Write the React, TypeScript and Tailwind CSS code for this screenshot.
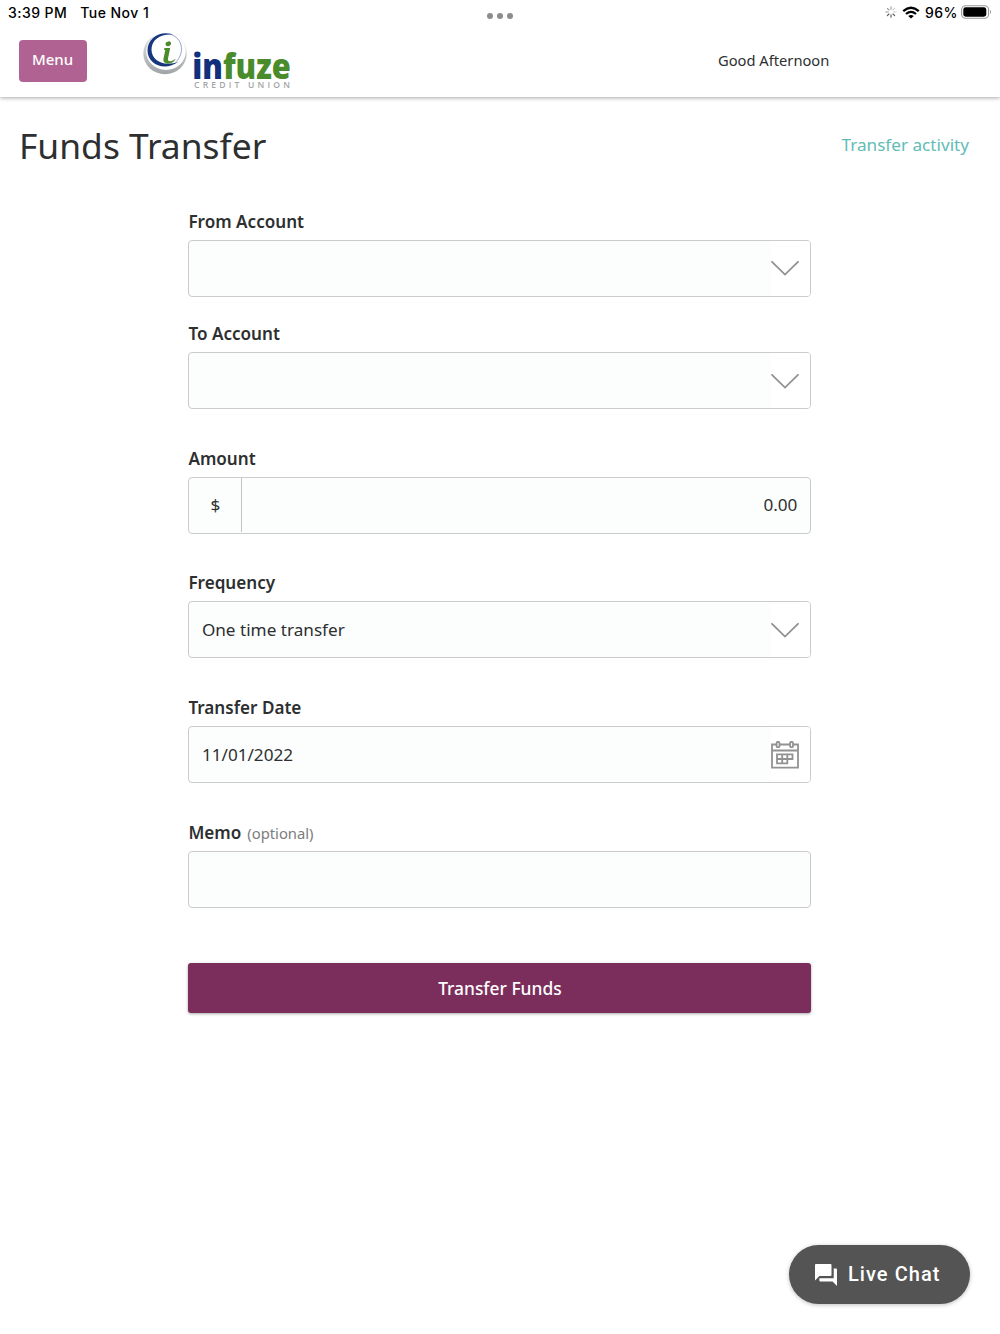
import type { ReactNode } from "react";

const Chevron = () => (
  <svg width="28" height="16" viewBox="0 0 28 16" fill="none" stroke="#919191" strokeWidth="1.8" strokeLinecap="round">
    <path d="M1 1.8 14 14.6 27 1.8" />
  </svg>
);

const CalendarIcon = () => (
  <svg width="28" height="28" viewBox="0 0 28 28" fill="none" stroke="#929292" strokeWidth="1.8">
    <path d="M5.5 3.5H1V26.7H27V3.5H22.5M8.5 3.5H19.5M1 9.5H27" />
    <rect x="5.6" y="1" width="2.9" height="5.2" rx="1" />
    <rect x="19.1" y="1" width="2.9" height="5.2" rx="1" />
    <path d="M6 13.3H21.5V18H6ZM6 18V22.4H16.3V13.3M11.2 13.3V22.4" />
  </svg>
);

const Logo = () => (
  <svg className="overflow-visible" width="152" height="62" viewBox="0 0 152 62" role="img" aria-label="infuze credit union">
    <defs>
      <linearGradient id="ring" x1="0" y1="0" x2="0" y2="1">
        <stop offset="0" stopColor="#e9eaeb" />
        <stop offset="0.5" stopColor="#c4c6c8" />
        <stop offset="1" stopColor="#a0a4a6" />
      </linearGradient>
    </defs>
    <ellipse cx="23" cy="23.5" rx="21.7" ry="20.7" fill="url(#ring)" />
    <ellipse cx="24" cy="21.3" rx="19.8" ry="18.6" fill="#fff" />
    <path d="M31 4.6C19 0 5.5 7.5 5.5 20.5C5.5 34.5 23 42 36.5 31.5C24 37 9.5 32 9.5 19.5C9.5 9 19.5 3.4 31 4.6Z" fill="#17367e" />
    <path d="M28 4.2C41.5 7.8 42.5 24 34 31.6" fill="none" stroke="#17367e" strokeWidth="0.9" opacity="0.5" />
    <ellipse cx="26.3" cy="13.8" rx="2.8" ry="2.3" fill="#4a8b2c" transform="rotate(-20 26.3 13.8)" />
    <path d="M22.5 18.1H28.2L26 28.6Q25.5 31.6 28.6 31.2Q31.5 30.8 34 28.6Q30.6 34.6 24.6 33.5Q20.6 32.4 21.5 28.4L23.3 20H22Z" fill="#4a8b2c" />
    <text x="50.3" y="48.6" fontFamily="Open Sans" fontWeight="800" fontSize="35" textLength="98.5" lengthAdjust="spacingAndGlyphs" fill="#4a8b2c">
      <tspan fill="#10307b">in</tspan>fuze
    </text>
    <text x="52" y="58.4" fontFamily="Open Sans" fontWeight="600" fontSize="8.6" textLength="96" lengthAdjust="spacing" fill="#a3a6a8">CREDIT UNION</text>
  </svg>
);

const StatusBar = () => (
  <div className="grid h-6 grid-cols-3 items-center pl-2 pr-2 font-['Inter',sans-serif] text-[14px] font-medium text-black">
    <div className="flex gap-[13px] whitespace-nowrap tracking-[0.45px]">
      <span>3:39 PM</span>
      <span>Tue Nov 1</span>
    </div>
    <div className="flex justify-center gap-1 pt-[7px]">
      <i className="size-[6px] rounded-full bg-[#8c8c8c]" />
      <i className="size-[6px] rounded-full bg-[#8c8c8c]" />
      <i className="size-[6px] rounded-full bg-[#8c8c8c]" />
    </div>
    <div className="flex items-center justify-end">
      <svg width="12" height="12" viewBox="0 0 12 12" strokeWidth="1.1" strokeLinecap="round">
        <path d="M6 .8V3.2M2.3 2.3 4 4M.8 6H3.2" stroke="#999" />
        <path d="M2.3 9.7 4 8M6 8.8V11.2M9.7 9.7 8 8" stroke="#555" />
        <path d="M8.8 6H11.2M9.7 2.3 8 4" stroke="#ccc" />
      </svg>
      <svg className="ml-[5px]" width="18" height="13" viewBox="0 0 18 13" fill="none" stroke="#000" strokeWidth="2.3">
        <path d="M1.2 5.1Q9 -1.7 16.8 5.1M4 8Q9 3.7 14 8" />
        <path d="M9 12.6 6.2 9.9Q9 7.9 11.8 9.9Z" fill="#000" stroke="none" />
      </svg>
      <span className="ml-[5px] tracking-[0.5px]">96%</span>
      <svg className="ml-[3px]" width="31" height="14" viewBox="0 0 31 14">
        <rect x=".6" y=".7" width="27" height="12.6" rx="4" fill="none" stroke="#999" strokeWidth="1.1" />
        <rect x="2.3" y="2.3" width="23" height="9.4" rx="2.4" fill="#000" />
        <path d="M29 4.8Q31 7 29 9.2Z" fill="#999" />
      </svg>
    </div>
  </div>
);

const Field = ({ label, hint, className, children }: { label: string; hint?: string; className?: string; children?: ReactNode }) => (
  <div className={className}>
    <div className="mb-[6px] flex h-6 items-baseline text-[17.1px] font-semibold leading-6 text-[#2d2f30]">
      {label}
      {hint && <span className="ml-[6px] text-[14.8px] font-normal text-[#7b7d7e]">{hint}</span>}
    </div>
    <div className="flex h-[57px] items-center rounded-[4px] border-[1.5px] border-[#cbcbcb] bg-[#fcfefd] text-[17.15px] text-[#2d2f30]">
      {children}
    </div>
  </div>
);

const Trailing = ({ children }: { children: ReactNode }) => (
  <div className="ml-auto flex h-full w-[39px] items-center rounded-r-[3px] bg-white">{children}</div>
);

export default function App() {
  return (
    <div className="flex min-h-[1334px] w-full flex-col bg-white font-['Noto_Sans',sans-serif] text-[#2d2f30]">
      <header className="h-[96.5px] shadow-[0_1px_4px_rgba(0,0,0,0.35)]">
        <StatusBar />
        <div className="flex items-start">
          <button className="ml-[18.5px] mt-4 h-[42px] w-[68px] rounded-[4px] bg-[#b06392] pb-[4px] text-[15px] font-medium text-white">Menu</button>
          <div className="ml-[55.5px] mt-[6px]">
            <Logo />
          </div>
          <span className="ml-[424px] mt-[24px] whitespace-nowrap text-[14.7px] leading-6">Good Afternoon</span>
        </div>
      </header>

      <div className="flex items-start justify-between pl-[19px] pr-[31px] pt-[23.5px]">
        <h1 className="text-[35.4px] leading-[51px]">Funds Transfer</h1>
        <a className="mt-[13px] text-[17.15px] leading-6 text-[#62bcb5]">Transfer activity</a>
      </div>

      <main className="ml-[188.4px] mt-[38.5px] w-[623px]">
        <Field label="From Account">
          <Trailing><Chevron /></Trailing>
        </Field>
        <Field label="To Account" className="mt-[25.5px]">
          <Trailing><Chevron /></Trailing>
        </Field>
        <Field label="Amount" className="mt-[37.7px]">
          <span className="flex h-[54px] w-[53px] items-center justify-center border-r-[1.5px] border-[#c4c4c4]">$</span>
          <span className="ml-auto mr-[13px]">0.00</span>
        </Field>
        <Field label="Frequency" className="mt-[37.7px]">
          <span className="ml-[12.5px]">One time transfer</span>
          <Trailing><Chevron /></Trailing>
        </Field>
        <Field label="Transfer Date" className="mt-[37.7px]">
          <span className="ml-[12.5px]">11/01/2022</span>
          <Trailing><CalendarIcon /></Trailing>
        </Field>
        <Field label="Memo" hint="(optional)" className="mt-[37.7px]" />
        <button className="mt-[55px] h-[50px] w-full rounded-[3px] bg-[#7b2d5b] text-[17.4px] font-medium text-white shadow-[0_1px_3px_rgba(0,0,0,0.35)]">
          Transfer Funds
        </button>
      </main>

      <button className="mb-[30px] ml-auto mr-[30px] mt-auto flex h-[59px] w-[181px] items-center rounded-full bg-[#545454] pl-[26px] font-['Roboto',sans-serif] text-[20px] font-medium tracking-[1.05px] text-white shadow-[0_1px_4px_rgba(0,0,0,0.25)]">
        <svg width="22" height="22" viewBox="2 2 20 20" fill="currentColor">
          <path d="M21 6h-2v9H6v2c0 .55.45 1 1 1h11l4 4V7c0-.55-.45-1-1-1zm-4 6V3c0-.55-.45-1-1-1H3c-.55 0-1 .45-1 1v14l4-4h10c.55 0 1-.45 1-1z" />
        </svg>
        <span className="mb-0.5 ml-[11px] whitespace-nowrap">Live Chat</span>
      </button>
    </div>
  );
}
